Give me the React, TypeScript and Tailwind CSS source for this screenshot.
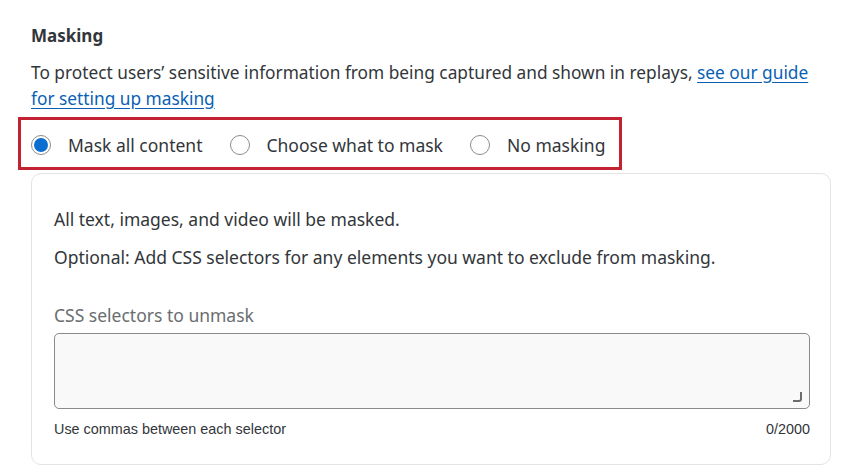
import React from "react";

function Radio({ checked, label }: { checked?: boolean; label: string }) {
  return (
    <label className="flex items-center gap-[17px]">
      <span
        className={
          "flex h-[20px] w-[20px] items-center justify-center rounded-full border border-[#8c8c8c] bg-white"
        }
      >
        {checked ? <span className="h-[14px] w-[14px] rounded-full bg-[#0a6ed1]" /> : null}
      </span>
      <span className="text-[17.5px] leading-[24px] text-[#32363a]">{label}</span>
    </label>
  );
}

export default function App() {
  return (
    <div
      className="min-h-[475px] w-[850px] bg-white pl-[31px] pt-[26px]"
      style={{ fontFamily: '"Noto Sans", "Open Sans", sans-serif' }}
    >
      <div className="text-[17px] font-bold leading-[20px] text-[#32363a]">Masking</div>
      <p className="mt-[14px] w-[790px] text-[17.3px] leading-[26px] text-[#32363a]">
        To protect users’ sensitive information from being captured and shown in replays,{" "}
        <a className="text-[#0a5fb4] underline underline-offset-[3px]">see our guide for setting up masking</a>
      </p>
      <div className="-ml-[13px] mt-[5px] flex h-[53px] w-[604px] items-center gap-[27px] border-[3px] border-[#c32232] pb-[1px] pl-[10px] pt-[3px]">
        <Radio checked label="Mask all content" />
        <Radio label="Choose what to mask" />
        <Radio label="No masking" />
      </div>
      <div className="mt-[3px] h-[292px] w-[800px] rounded-[10px] border border-[#e3e3e3] px-[22px] pt-[33px]">
        <div className="text-[17.5px] leading-[24px] text-[#32363a]">All text, images, and video will be masked.</div>
        <div className="mt-[14px] text-[17.5px] leading-[24px] text-[#32363a]">
          Optional: Add CSS selectors for any elements you want to exclude from masking.
        </div>
        <div className="mt-[34px] text-[17.5px] leading-[24px] text-[#6a6d70]">CSS selectors to unmask</div>
        <div className="relative mt-[6px] h-[76px] w-[756px] rounded-[5px] border-[1.5px] border-[#8a8a8a] bg-[#f9f9f9]">
          <svg className="absolute bottom-[5px] right-[6px]" width="12" height="12" viewBox="0 0 12 12">
            <path d="M10 1 V8 Q10 10 8 10 H2" fill="none" stroke="#6a6d70" strokeWidth="2" />
          </svg>
        </div>
        <div
          className="mt-[11px] flex w-[756px] justify-between text-[14.4px] leading-[18px] text-[#32363a]"
          style={{ fontFamily: '"Liberation Sans", Arial, sans-serif' }}
        >
          <span>Use commas between each selector</span>
          <span>0/2000</span>
        </div>
      </div>
    </div>
  );
}
